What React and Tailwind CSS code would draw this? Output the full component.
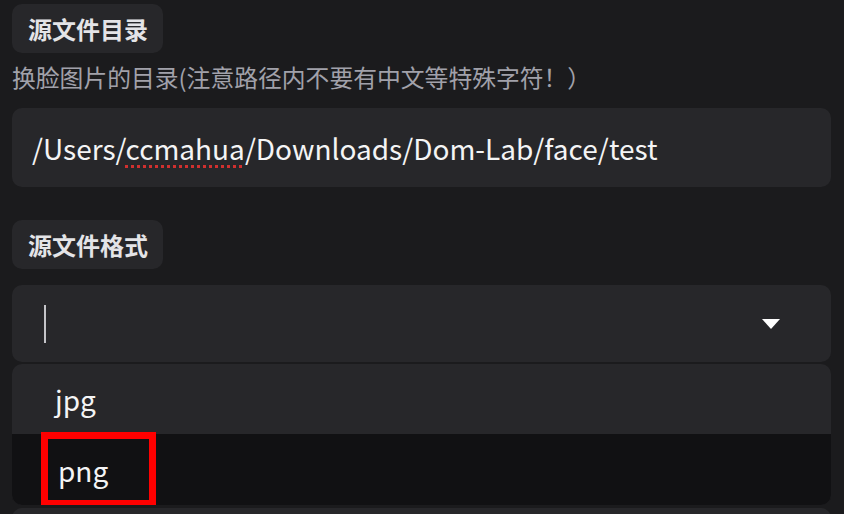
import React from "react";

// small pill label above a field
const FieldLabel = ({ children }) => (
  <div className="inline-flex h-[49px] w-[151px] items-center rounded-[10px] bg-[#27272a] pl-[16px] text-[24px] font-bold text-[#e4e4e7]">
    {children}
  </div>
);

const App = () => {
  return (
    <div
      className="relative h-[514px] w-[844px] overflow-hidden bg-[#1b1b1d] pl-[12px] pr-[13px] pt-[4px]"
      style={{ fontFamily: '"Noto Sans CJK SC", "Noto Sans", sans-serif' }}
    >
      <FieldLabel>源文件目录</FieldLabel>
      <p className="mt-[9px] text-[23.8px] leading-[30px] text-[#a1a1aa]">
        换脸图片的目录(注意路径内不要有中文等特殊字符！）
      </p>
      <div className="mt-[16px] flex h-[79px] items-center rounded-[10px] bg-[#27272a] px-[20px] text-[28px] text-[#f4f4f5]">
        <span>
          /Users/
          <span className="underline decoration-[#d0302f] decoration-dotted decoration-[3px] underline-offset-[5px]">
            ccmahua
          </span>
          /Downloads/Dom-Lab/face/test
        </span>
      </div>

      <div className="mt-[33px]">
        <FieldLabel>源文件格式</FieldLabel>
      </div>

      <div className="relative mt-[16px]">
        <div className="flex h-[77px] items-center justify-between rounded-[10px] bg-[#27272a] pl-[32px] pr-[51px]">
          <span className="h-[38px] w-[2px] bg-[#c4c4c8]" />
          <svg width="18" height="10" viewBox="0 0 18 10">
            <path d="M0 0 L18 0 L9 10 Z" fill="#ffffff" />
          </svg>
        </div>

        {/* options list */}
        <div className="absolute left-0 right-0 top-[79px] z-10 overflow-hidden rounded-[10px] bg-[#27272a] text-[28px] text-[#f4f4f5]">
          <div className="flex h-[70px] items-center pl-[43px]">jpg</div>
          <div className="flex h-[71px] items-center bg-[#111113] pl-[29px]">
            <span className="flex h-[75px] w-[115px] items-center border-[7px] border-[#ff0000] pl-[10px]">
              png
            </span>
          </div>
        </div>

        <div className="mt-[146px] h-[40px] rounded-[10px] bg-[#27272a]" />
      </div>
    </div>
  );
};

export default App;
